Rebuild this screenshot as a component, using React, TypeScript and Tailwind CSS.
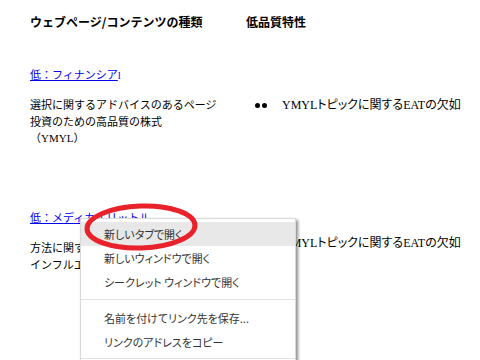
import React from "react";

const BODY = "font-['Liberation_Serif','Noto_Sans_CJK_JP',serif]";

const MENU_ITEMS: { label: string; active?: boolean; sepBefore?: boolean }[] = [
  { label: "新しいタブで開く", active: true },
  { label: "新しいウィンドウで開く" },
  { label: "シークレット ウィンドウで開く" },
  { label: "名前を付けてリンク先を保存...", sepBefore: true },
  { label: "リンクのアドレスをコピー" },
];

function Bullet() {
  return (
    <span className="flex items-center gap-[2px] w-[27px] shrink-0">
      <span className="w-[5px] h-[5px] rounded-full bg-black" />
      <span className="w-[5px] h-[5px] rounded-full bg-black" />
    </span>
  );
}

function ContextMenu() {
  return (
    <div className="absolute left-[80px] top-[218px] w-[216px] bg-white border border-[#d9d9d9] shadow-[2px_2px_3px_rgba(0,0,0,0.45)] py-[3px] font-['Noto_Sans_CJK_JP',sans-serif] [font-feature-settings:'palt'] text-[11px] text-[#333]">
      {MENU_ITEMS.map((item) => (
        <React.Fragment key={item.label}>
          {item.sepBefore && <div className="h-px bg-[#e0e0e0] mt-[5px] mb-[6px]" />}
          <div className={`h-[24px] flex items-center pl-[23px] ${item.active ? "bg-[#e8e8e8]" : ""}`}>
            {item.label}
          </div>
        </React.Fragment>
      ))}
      <div className="h-px bg-[#e0e0e0] mt-[4px] mb-[6px]" />
      <div className="h-[24px]" />
    </div>
  );
}

function RightCell({ lh }: { lh: string }) {
  return (
    <div className="flex items-start pl-[9px] text-[12px] [font-feature-settings:'palt']">
      <span className={`${lh} flex items-center`}>
        <Bullet />
      </span>
      <span className={lh}>YMYLトピックに関するEATの欠如</span>
    </div>
  );
}

export default function App() {
  return (
    <div className="relative w-[480px] h-[360px] overflow-hidden bg-white text-black">
      {/* Table */}
      <div className="pl-[30px] pt-[14px]">
        <div className="grid grid-cols-[216px_1fr] font-['Noto_Sans_CJK_JP',sans-serif] font-bold text-[12px] leading-[16px]">
          <span>ウェブページ/コンテンツの種類</span>
          <span>低品質特性</span>
        </div>

        {/* Row 1 */}
        <div className={`${BODY} text-[11px] leading-[16px] mt-[37px]`}>
          <p>
            <a className="text-[#0000ee] underline">低：フィナンシア</a>
            <span className="text-[#0000ee]">l</span>
          </p>
          <div className="grid grid-cols-[216px_1fr] mt-[14px]">
            <div className="leading-[16.5px]">
              <p>選択に関するアドバイスのあるページ</p>
              <p>投資のための高品質の株式</p>
              <p>（YMYL）</p>
            </div>
            <RightCell lh="h-[16.5px] leading-[16.5px]" />
          </div>
        </div>

        {/* Row 2 */}
        <div className={`${BODY} text-[11px] leading-[16px] mt-[63px]`}>
          <p>
            <a className="text-[#0000ee] underline">低：メディカルリットル</a>
          </p>
          <div className="grid grid-cols-[216px_1fr] mt-[14px]">
            <div className="leading-[17px]">
              <p>方法に関するアドバイス</p>
              <p>インフルエンザの治療</p>
            </div>
            <div className="-mt-[5px]">
              <RightCell lh="h-[17px] leading-[17px]" />
            </div>
          </div>
        </div>
      </div>

      <ContextMenu />

      {/* Red annotation circle */}
      <svg className="absolute left-0 top-0 pointer-events-none" width="480" height="360">
        <ellipse cx="141" cy="227" rx="54" ry="21" fill="none" stroke="#e8212b" strokeWidth="5" transform="rotate(-2 141 227)" />
      </svg>
    </div>
  );
}
